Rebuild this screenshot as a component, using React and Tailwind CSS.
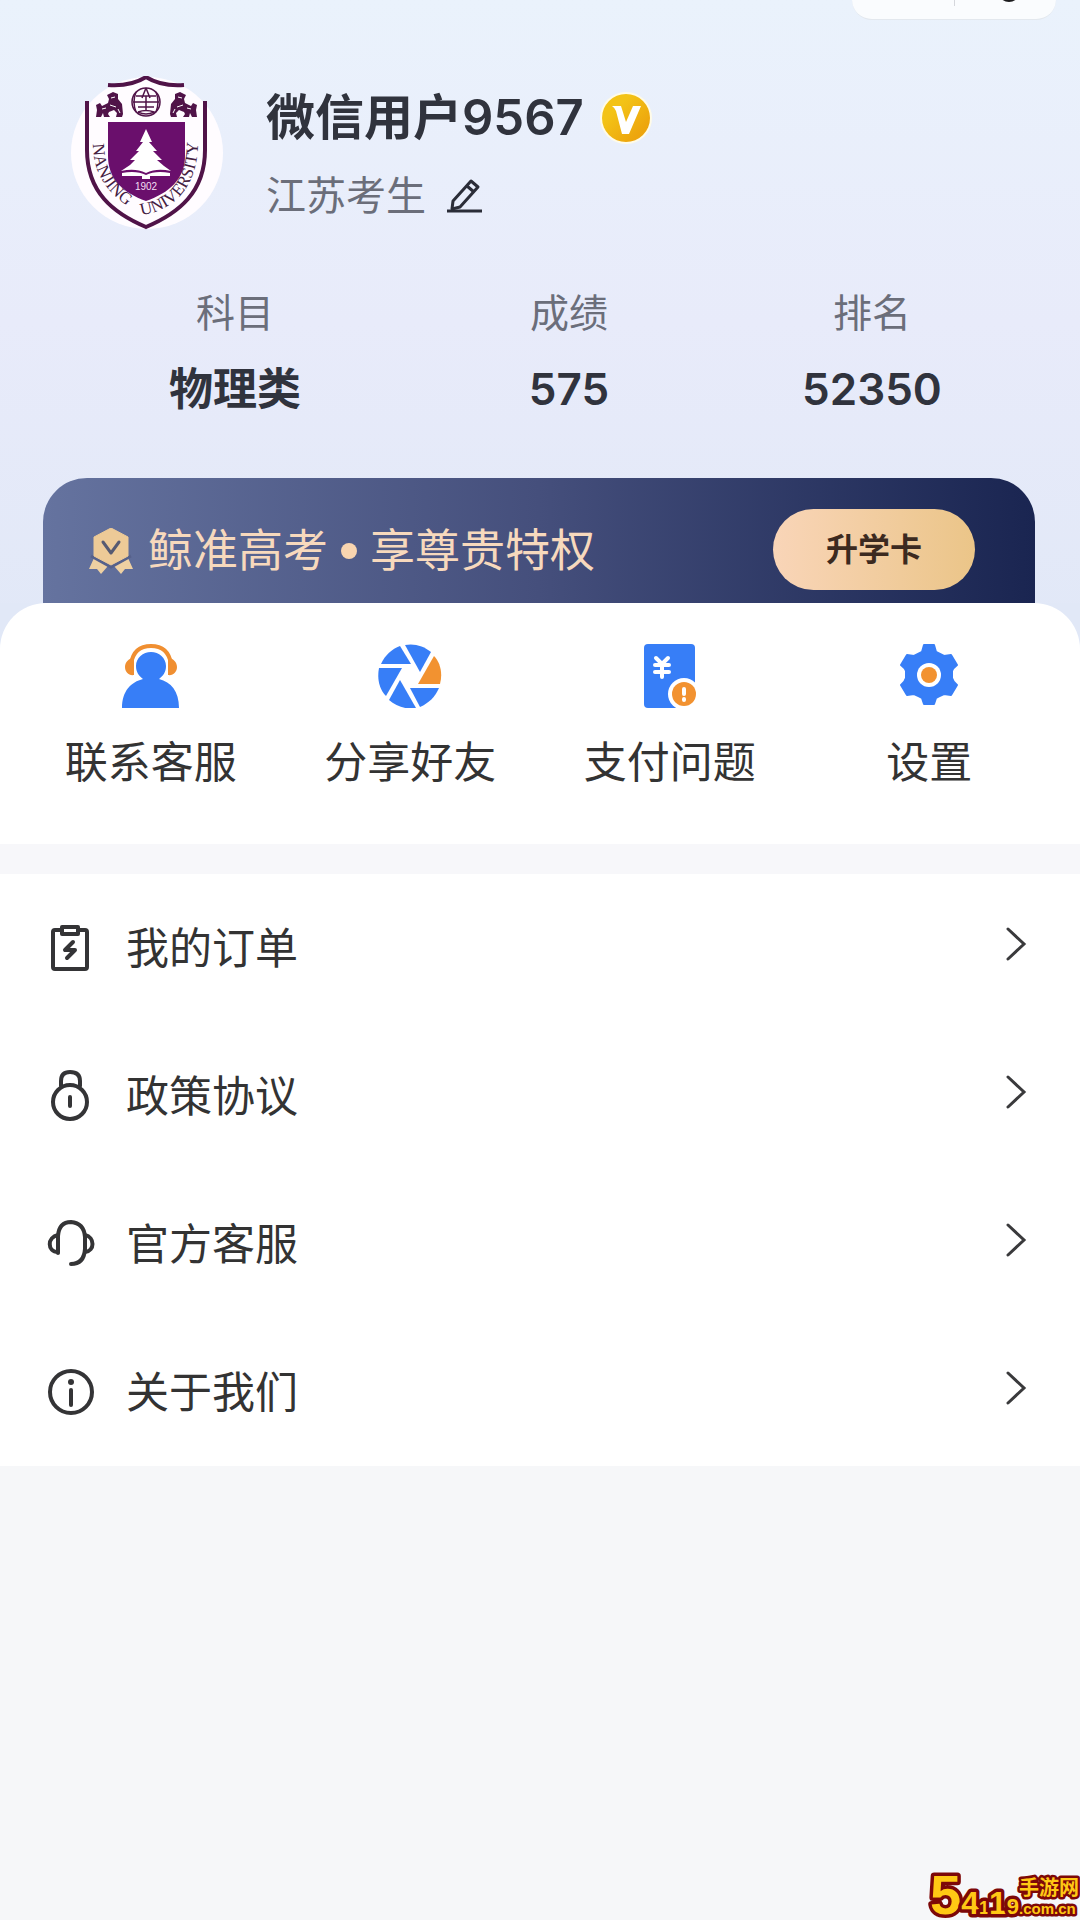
import React from "react";

const stats = [
    { label: "科目", value: "物理类" },
    { label: "成绩", value: "575" },
    { label: "排名", value: "52350" },
];

function Avatar(){
    return(
        <svg className="h-[154px] w-[154px] shrink-0" viewBox="0 0 154 154" role="img" aria-label="Nanjing University">
            <defs>
                <path id="arcLeft" d="M23 68 C24 96 33 116 68 137" />
                <path id="arcRight" d="M71 139 C108 134 130 106 128 60" />
            </defs>
            <circle cx="77" cy="77" r="76" fill="#fffcff" />
            <path d="M38 9 C52 10 65 8 76 1 C87 8 100 10 114 9" fill="none" stroke="#501348" strokeWidth="4" />
            <path d="M17 25 V74 C17 116 43 137 76 151 C109 137 135 116 135 74 V25" fill="none" stroke="#501348" strokeWidth="4" />
            <path d="M38 46 H115 V80 C115 103 99 117 76 125 C53 117 38 103 38 80 Z" fill="#6a0f6c" />
            <path d="M76 53 L82 66 L79 66 L87 75 L83 75 L92 84 L87 84 L94 90 L101 95 C92 93 84 93 76 97 C68 93 60 93 51 95 L60 89 L65 84 L60 84 L69 75 L66 75 L73 66 L70 66 Z" fill="#fff" />
            <path d="M52 97 C62 95 70 96 76 99 C82 96 90 95 100 97 V100 H80 V103 H72 V100 H52 Z" fill="#fff" />
            <text x="76" y="114" textAnchor="middle" fill="#f3dff3" fontSize="10" className="font-['Liberation_Sans',sans-serif]">1902</text>
            <g fill="none" stroke="#501348" strokeWidth="1.5">
                <circle cx="76" cy="26" r="14" />
                <path d="M76 12 L72 22 M76 12 L80 22 M66 20 H86 M63 26 H89 M68 31 H84 M76 20 V35 M68 36 Q76 33 84 36 Q76 40 68 36 M66 16 Q62 26 66 36 M86 16 Q90 26 86 36" />
            </g>
            <g id="lion" fill="#501348">
                <path d="M37 19 L43 16 L48 18 L48 23 L52 28 L53 38 L52 41 H46 L47 37 L44 34 L39 36 L38 38 L40 41 H34 L33 37 L31 41 H26 L27 34 L26 29 L30 27 L32 30 L38 27 L39 23 Z" />
                <path d="M41 22 L45 21 M40 29 L46 31 M32 33 L36 32 M48 33 L50 37" stroke="#fff" strokeWidth="1" />
            </g>
            <use href="#lion" transform="translate(153 0) scale(-1 1)" />
            <g fill="#44203f" fontSize="17" className="font-['Liberation_Serif',serif]">
                <text><textPath href="#arcLeft">NANJING</textPath></text>
                <text><textPath href="#arcRight">UNIVERSITY</textPath></text>
            </g>
        </svg>
    )}

function VipBadge(){
    return(
        <svg className="h-[52px] w-[52px]" viewBox="0 0 52 52" aria-hidden="true">
            <defs>
                <linearGradient id="vip" x1="0" y1="0" x2="1" y2="1">
                    <stop offset="0.3" stopColor="#f3c316" />
                    <stop offset="0.8" stopColor="#eda50d" />
                </linearGradient>
            </defs>
            <circle cx="26" cy="26" r="26" fill="#fffbe8" />
            <circle cx="26" cy="26" r="24" fill="url(#vip)" />
            <path d="M12 14 H21 L26 30 L33 14 H41 L29 42 H22 L16 19 Q15 16 12 14 Z" fill="#fff" />
        </svg>
    )}

function PencilIcon(){
    return(
        <svg className="h-9 w-9" viewBox="0 0 36 36" fill="none" stroke="#2b2d38" strokeWidth="3" aria-hidden="true">
            <path d="M1 33 H36" />
            <path d="M6 31 L7 23 L25 3 L32 9 L14 29 L6 31 Z M21 8 L28 14" strokeLinejoin="round" />
        </svg>
    )}

function MedalIcon(){
    return(
        <svg className="h-[46px] w-[46px]" viewBox="0 0 46 46" aria-hidden="true">
            <path d="M6 30 L20 38 L13 46 L9 41 L1 41 Z M40 30 L26 38 L33 46 L37 41 L45 41 Z" fill="#eed0a2" />
            <path d="M3 28 L23 39 L43 28" fill="none" stroke="#56618b" strokeWidth="3" />
            <path d="M23 0 L40 9 V28 L23 37 L6 28 V9 Z" fill="#edca97" stroke="#edca97" strokeLinejoin="round" />
            <path d="M15 14 L23 25 L31 14" fill="none" stroke="#565a72" strokeWidth="3" strokeLinecap="round" strokeLinejoin="round" />
        </svg>
    )}

function ServiceIcon(){
    return(
        <svg className="h-16 w-16" viewBox="0 0 64 64" aria-hidden="true">
            <path d="M12 20 C14 7 22 2 32 2 C42 2 50 7 52 20" fill="none" stroke="#f08f31" strokeWidth="4" />
            <path d="M15 14 V31 C10 32 6 28 6 23 C6 18 10 14 15 14 Z M49 14 V31 C54 32 58 28 58 23 C58 18 54 14 49 14 Z" fill="#f08f31" />
            <circle cx="32" cy="22" r="17" fill="#fff" />
            <path d="M32 8 C40 8 47 14 47 22 C47 28 44 32 40 35 C52 38 60 47 60 64 H3 C3 47 12 38 24 35 C20 32 17 28 17 22 C17 14 24 8 32 8 Z" fill="#377ef7" />
        </svg>
    )}

function ShutterIcon(){
    return(
        <svg className="h-16 w-16" viewBox="0 0 64 64" aria-hidden="true">
            <path d="M27 1 C36 -1 46 2 53 8 L42 28 Z" fill="#377ef7" />
            <path d="M56 12 C62 18 65 29 62 40 H40 Z" fill="#f29230" />
            <path d="M61 44 C57 53 51 59 42 63 L32 44 Z" fill="#377ef7" />
            <path d="M38 64 C28 66 18 62 11 56 L22 36 Z" fill="#377ef7" />
            <path d="M8 52 C1 45 -1 34 1 24 H24 Z" fill="#377ef7" />
            <path d="M3 20 C7 11 14 5 22 2 L33 20 Z" fill="#377ef7" />
        </svg>
    )}

function PayIcon(){
    return(
        <svg className="h-16 w-16" viewBox="0 0 64 64" aria-hidden="true">
            <path d="M10 0 H53 Q57 0 57 4 V50 L44 64 H10 Q6 64 6 60 V4 Q6 0 10 0 Z" fill="#377ef7" />
            <path d="M18 14 L24 20 L30 14 M17 21 H31 M17 28 H31 M24 20 V33" fill="none" stroke="#fff" strokeWidth="4" strokeLinecap="round" />
            <circle cx="46" cy="50" r="16" fill="#fff" />
            <circle cx="46" cy="50" r="12" fill="#f29230" />
            <path d="M46 45 V50 M46 55 V56" stroke="#fff" strokeWidth="4" strokeLinecap="round" />
        </svg>
    )}

function GearIcon(){
    return(
        <svg className="h-16 w-16" viewBox="0 0 64 64" aria-hidden="true">
            <path d="M27 1 H37 L39 8 Q43 10 47 12 L54 11 L60 21 Q56 24 55 27 V34 Q56 38 60 41 L54 51 L47 50 Q42 52 39 54 L37 60 H27 L25 54 Q22 52 17 50 L10 51 L4 41 Q8 38 9 34 V27 Q8 24 4 21 L10 11 L17 12 Q21 10 25 8 Z" fill="#377ef7" stroke="#377ef7" strokeWidth="2" strokeLinejoin="round" />
            <circle cx="32" cy="31" r="12" fill="#fff" />
            <circle cx="32" cy="31" r="8" fill="#f29230" />
        </svg>
    )}

const lineIcon = "h-[52px] w-12 shrink-0";

function OrderIcon(){
    return(
        <svg className={lineIcon} viewBox="0 0 48 52" fill="none" stroke="#343436" strokeWidth="4" strokeLinejoin="round" aria-hidden="true">
            <path d="M15 8 H8 Q6 8 6 10 V45 Q6 47 8 47 H38 Q40 47 40 45 V10 Q40 8 38 8 H31" />
            <rect x="15" y="5" width="16" height="7" />
            <path d="M26 20 L18 28 H28 L20 36" strokeLinecap="round" />
        </svg>
    )}

function PolicyIcon(){
    return(
        <svg className={lineIcon} viewBox="0 0 48 52" fill="none" stroke="#343436" strokeWidth="4" strokeLinecap="round" aria-hidden="true">
            <path d="M14 16 V11 Q14 2 23 2 Q33 2 33 11 V16" />
            <circle cx="23" cy="32" r="17" />
            <path d="M23 27 V36" />
        </svg>
    )}

function HeadsetIcon(){
    return(
        <svg className={lineIcon} viewBox="0 0 48 52" fill="none" stroke="#343436" strokeWidth="4" strokeLinecap="round" aria-hidden="true">
            <path d="M11 35 V18 Q12 4 24 4 Q37 5 38 19 V31 Q37 46 24 46" />
            <path d="M11 17 C0 19 0 34 11 34 M38 17 C48 19 48 33 38 34" />
        </svg>
    )}

function AboutIcon(){
    return(
        <svg className={lineIcon} viewBox="0 0 48 52" fill="none" stroke="#343436" strokeWidth="4" strokeLinecap="round" aria-hidden="true">
            <circle cx="24" cy="26" r="21" />
            <path d="M24 24 V39" />
            <circle cx="24" cy="16" r="3" fill="#343436" stroke="none" />
        </svg>
    )}

const shortcuts = [
    { label: "联系客服", Icon: ServiceIcon },
    { label: "分享好友", Icon: ShutterIcon },
    { label: "支付问题", Icon: PayIcon },
    { label: "设置", Icon: GearIcon },
];

const menus = [
    { label: "我的订单", Icon: OrderIcon },
    { label: "政策协议", Icon: PolicyIcon },
    { label: "官方客服", Icon: HeadsetIcon },
    { label: "关于我们", Icon: AboutIcon },
];

function SiteMark(){
    return(
        <svg className="absolute right-0 bottom-0 h-[60px] w-[154px]" viewBox="0 0 154 60" role="img" aria-label="54119手游网 .com.cn">
            <g fill="#ffc814" stroke="#7d0808" strokeLinejoin="round" paintOrder="stroke" className="font-['Liberation_Sans','Noto_Sans_CJK_SC',sans-serif] font-bold">
                <text x="4" y="54" strokeWidth="7">
                    <tspan fontSize="56">5</tspan>
                    <tspan fontSize="32">4</tspan>
                    <tspan fontSize="18">1</tspan>
                    <tspan fontSize="32">1</tspan>
                    <tspan fontSize="22">9</tspan>
                </text>
                <text x="93" y="35" fontSize="20" strokeWidth="5">手游网</text>
                <text x="93" y="54" fontSize="15" strokeWidth="5">.com.cn</text>
            </g>
        </svg>
    )}

function App(){
    return(
        <div className="relative min-h-screen overflow-hidden bg-[#f6f7f9] font-['Inter','Noto_Sans_CJK_SC',sans-serif] text-[#333333]">
            <header className="bg-linear-to-b from-[#eaf2fc] via-[#e8ebfa] to-[#e1e8f7] pt-[76px] pb-[46px]">
                <div className="absolute top-0 right-6 flex h-5 w-[204px] justify-center overflow-hidden rounded-b-[28px] border-b border-[#e3e8ee] bg-[#fafcfe]">
                    <span className="h-1.5 w-px bg-[#d5d7dc]"></span>
                    <span className="absolute -top-5 right-9 h-[22px] w-[22px] rounded-full bg-[#1c1c1e]"></span>
                </div>

                <div className="flex gap-[42px] pl-[70px]">
                    <Avatar />
                    <div className="pt-2">
                        <div className="flex items-center gap-4">
                            <h1 className="text-[49px] leading-[68px] font-semibold text-[#30333d]">微信用户9567</h1>
                            <VipBadge />
                        </div>
                        <div className="mt-3.5 flex items-center gap-5">
                            <p className="text-[40px] leading-[60px] text-[#6b6e7a]">江苏考生</p>
                            <button aria-label="编辑"><PencilIcon /></button>
                        </div>
                    </div>
                </div>

                <div className="mt-[53px] grid grid-cols-[334fr_334fr_272fr] pr-[72px] pl-[68px] text-center">
                    {stats.map((item) => (
                        <div key={item.label}>
                            <p className="text-[39px] leading-[60px] text-[#6b6e7a]">{item.label}</p>
                            <p className="mt-4 text-[44px] leading-[60px] font-semibold text-[#30333d]">{item.value}</p>
                        </div>
                    ))}
                </div>

                <div className="mr-[45px] ml-[43px] mt-[59px] -mb-[46px] flex h-[171px] items-start justify-between rounded-t-[44px] bg-linear-to-r from-[#65739f] via-[#454f7c] via-50% to-[#1a2551] pt-[31px] pr-[60px] pl-[45px]">
                    <div className="flex h-[84px] items-center text-[45px] text-[#f7d9bd]">
                        <MedalIcon />
                        <span className="ml-[14px]">鲸准高考</span>
                        <span className="mx-[13px] h-4 w-4 rounded-full bg-[#f9d5b0]"></span>
                        <span>享尊贵特权</span>
                    </div>
                    <button className="h-[81px] w-[202px] rounded-full bg-linear-to-r from-[#f9d5b8] to-[#ebc588] text-[32px] font-semibold text-[#3c2a20]">升学卡</button>
                </div>
            </header>

            <section className="relative bg-[#e1e8f7]">
                <div className="relative -mt-[46px] grid h-[241px] grid-cols-4 rounded-t-[46px] bg-white px-[21px] pt-[41px]">
                    {shortcuts.map(({ label, Icon }) => (
                        <button key={label} className="flex flex-col items-center">
                            <Icon />
                            <span className="mt-6 text-[43px] leading-[60px]">{label}</span>
                        </button>
                    ))}
                </div>
            </section>

            <nav className="border-t-[30px] border-[#f7f7fa] bg-white">
                {menus.map(({ label, Icon }) => (
                    <a key={label} href="#" className="flex h-[148px] items-center pr-[52px] pl-[47px]">
                        <Icon />
                        <span className="ml-[31px] text-[43px] leading-[60px]">{label}</span>
                        <svg className="mb-2 ml-auto h-9 w-6" viewBox="0 0 24 36" fill="none" stroke="#3a3a3c" strokeWidth="3" strokeLinecap="round" aria-hidden="true">
                            <path d="M4 3 L20 18 L4 33" />
                        </svg>
                    </a>
                ))}
            </nav>

            <SiteMark />
        </div>
    )}


export default App;
